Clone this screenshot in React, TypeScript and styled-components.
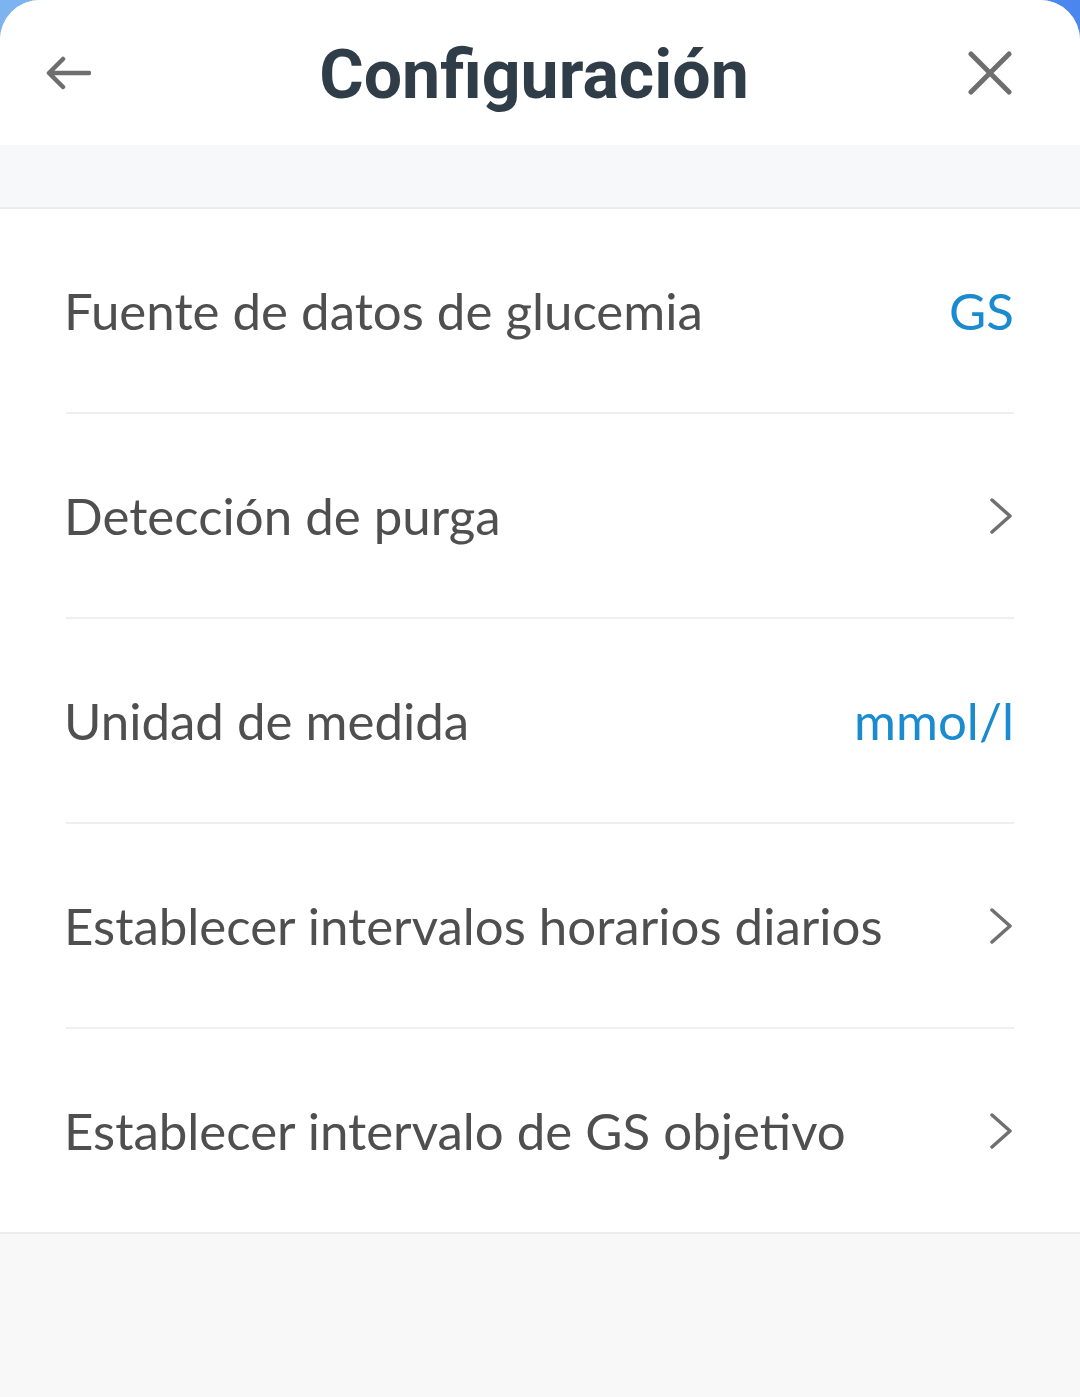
import React from 'react';
import styled, { createGlobalStyle } from 'styled-components';

const GlobalStyle = createGlobalStyle`
  html, body {
    margin: 0;
    padding: 0;
    background: linear-gradient(90deg, #7db4f0 0%, #4a86ee 100%);
  }
`;

const Sheet = styled.div`
  min-height: 1397px;
  background-color: #f8f8f8;
  border-radius: 40px 40px 0 0;
  overflow: hidden;
  display: flex;
  flex-direction: column;
`;

const Header = styled.header`
  height: 145px;
  background-color: #ffffff;
  display: flex;
  align-items: center;
  justify-content: space-between;
  padding: 0 66px 0 44px;
`;

const Title = styled.h1`
  margin: 0 0 0 10px;
  font-family: Roboto, 'Liberation Sans', sans-serif;
  font-weight: 700;
  font-size: 68px;
  color: #2e3d47;
  transform: translateY(2px);
`;

const IconButton = styled.button`
  border: 0;
  background: none;
  padding: 0;
  display: flex;
  align-items: center;
  justify-content: center;
  width: 48px;
  height: 48px;
`;

const Band = styled.div`
  height: 62px;
  background-color: #f7f8fa;
  border-bottom: 2px solid #ececec;
`;

const List = styled.div`
  background-color: #ffffff;
  border-bottom: 2px solid #ececec;
`;

const Row = styled.div<{ $last?: boolean }>`
  height: 203px;
  margin: 0 66px;
  display: flex;
  align-items: center;
  justify-content: space-between;
  border-bottom: ${(p) => (p.$last ? 'none' : '2px solid #efefef')};
`;

const Label = styled.span`
  font-family: Lato, 'Noto Sans', sans-serif;
  font-size: 51px;
  color: #4f4f4f;
  margin-left: -2px;
`;

const Value = styled.span`
  font-family: Lato, 'Noto Sans', sans-serif;
  font-size: 51px;
  color: #1a8bcf;
`;

const Chevron = () => (
  <svg width="26" height="36" viewBox="0 0 26 36" fill="none">
    <path d="M4 2 L22 18 L4 34" stroke="#707070" strokeWidth="3.5" strokeLinecap="round" strokeLinejoin="round" />
  </svg>
);

const rows: { label: string; value?: string }[] = [
  { label: 'Fuente de datos de glucemia', value: 'GS' },
  { label: 'Detección de purga' },
  { label: 'Unidad de medida', value: 'mmol/l' },
  { label: 'Establecer intervalos horarios diarios' },
  { label: 'Establecer intervalo de GS objetivo' },
];

function App(): JSX.Element {
  return (
    <>
      <GlobalStyle />
      <Sheet>
        <Header>
          <IconButton aria-label="Atrás">
            <svg width="46" height="34" viewBox="0 0 46 34" fill="none">
              <path d="M44 17 H5 M18 3 L4 17 L18 31" stroke="#6e6e6e" strokeWidth="4.5" strokeLinecap="round" strokeLinejoin="round" />
            </svg>
          </IconButton>
          <Title>Configuración</Title>
          <IconButton aria-label="Cerrar">
            <svg width="44" height="44" viewBox="0 0 44 44" fill="none">
              <path d="M3 3 L41 41 M41 3 L3 41" stroke="#6e6e6e" strokeWidth="5" strokeLinecap="round" />
            </svg>
          </IconButton>
        </Header>
        <Band />
        <List>
          {rows.map((r, i) => (
            <Row key={r.label} $last={i === rows.length - 1}>
              <Label>{r.label}</Label>
              {r.value ? <Value>{r.value}</Value> : <Chevron />}
            </Row>
          ))}
        </List>
      </Sheet>
    </>
  );
}

export default App;
